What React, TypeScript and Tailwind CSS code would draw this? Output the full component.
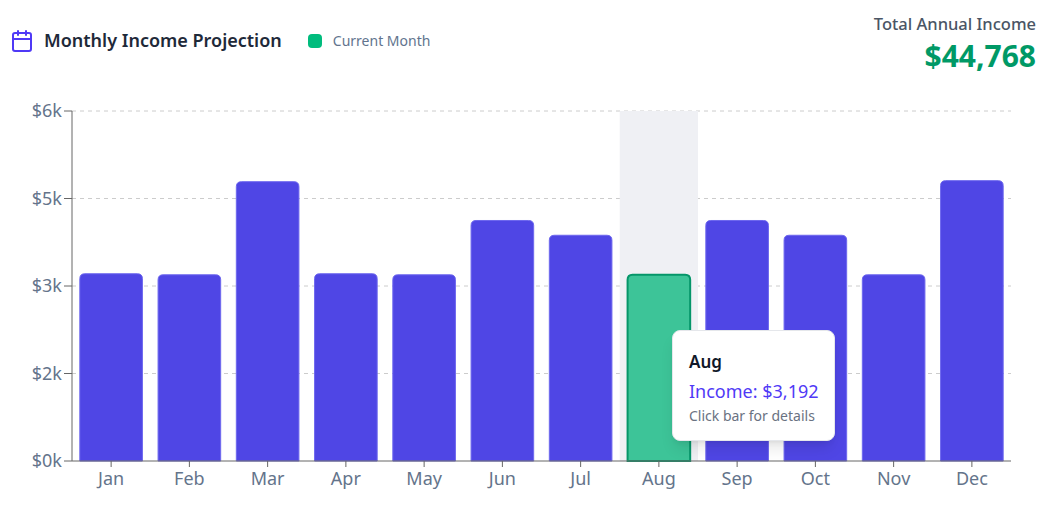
import { Calendar } from "lucide-react";

const months = [
  { name: "Jan", income: 3210 },
  { name: "Feb", income: 3192 },
  { name: "Mar", income: 4788 },
  { name: "Apr", income: 3210 },
  { name: "May", income: 3192 },
  { name: "Jun", income: 4123 },
  { name: "Jul", income: 3870 },
  { name: "Aug", income: 3192 },
  { name: "Sep", income: 4123 },
  { name: "Oct", income: 3870 },
  { name: "Nov", income: 3192 },
  { name: "Dec", income: 4806 },
];

const CURRENT = 7;
const TOP = 90;
const left = 72;
const right = 1011;
const y0 = 461;
const y1 = 111;
const maxVal = 6000;
const band = (right - left) / months.length;
const gap = band * 0.1;
const barW = band - gap * 2;
const ticks = [0, 1500, 3000, 4500, 6000];

const yOf = (v: number) => y0 - (v / maxVal) * (y0 - y1);
const fmt = (v: number) => `$${(v / 1000).toFixed(0)}k`;

function barPath(x: number, y: number, w: number, h: number, r: number) {
  return `M${x},${y + h} L${x},${y + r} Q${x},${y} ${x + r},${y} L${x + w - r},${y} Q${x + w},${y} ${x + w},${y + r} L${x + w},${y + h} Z`;
}

const IncomeChart = () => {
  return (
    <div className="relative h-[417px] w-full">
      <svg width="1050" height="417" className="block" style={{ fontFamily: '"Noto Sans", sans-serif' }}>
        <g transform={`translate(0,${-TOP})`}>
          {/* grid */}
          {ticks.slice(1).map((t) => (
            <line key={t} x1={left} x2={right} y1={yOf(t)} y2={yOf(t)} stroke="#cccccc" strokeDasharray="4 4" />
          ))}

          {/* hover cursor */}
          <rect x={left + band * CURRENT} y={y1} width={band} height={y0 - y1} fill="#eff0f4" />

          {/* bars */}
          {months.map((m, i) => {
            const x = left + band * i + gap;
            const y = yOf(m.income);
            const isCur = i === CURRENT;
            return (
              <path
                key={m.name}
                d={barPath(x, y, barW, y0 - y, 5)}
                fill={isCur ? "#10b981" : "#4f46e5"}
                fillOpacity={isCur ? 0.8 : 1}
                stroke={isCur ? "#059669" : "#6d67ee"}
                strokeWidth={isCur ? 2 : 1}
              />
            );
          })}

          {/* y axis */}
          <line x1={left} x2={left} y1={y1} y2={y0} stroke="#666" />
          {ticks.map((t) => (
            <g key={t}>
              <line x1={left - 8} x2={left} y1={yOf(t)} y2={yOf(t)} stroke="#666" />
              <text x={left - 10} y={yOf(t)} dy="0.35em" textAnchor="end" fontSize="18" fill="#64748b">
                {fmt(t)}
              </text>
            </g>
          ))}

          {/* x axis */}
          <line x1={left} x2={right} y1={y0} y2={y0} stroke="#666" />
          {months.map((m, i) => {
            const cx = left + band * i + band / 2;
            return (
              <g key={m.name}>
                <line x1={cx} x2={cx} y1={y0} y2={y0 + 6} stroke="#666" />
                <text x={cx} y={479} dy="0.35em" textAnchor="middle" fontSize="18" fill="#64748b">
                  {m.name}
                </text>
              </g>
            );
          })}
        </g>
      </svg>

      {/* Tooltip */}
      <div className="absolute left-[672px] top-[240px] w-[163px] h-[111px] whitespace-nowrap rounded-lg border border-gray-200 bg-white px-4 pt-[19px] shadow-lg">
        <p className="text-[17px] font-semibold leading-6 text-gray-900">Aug</p>
        <p className="mt-[5px] text-[18px] leading-6 text-indigo-600">Income: $3,192</p>
        <p className="mt-[3px] text-[14px] leading-5 text-gray-500">Click bar for details</p>
      </div>
    </div>
  );
};

export default function App() {
  return (
    <div className="h-[507px] w-[1050px] overflow-hidden bg-white" style={{ fontFamily: '"Noto Sans", sans-serif' }}>
      {/* Header */}
      <div className="flex h-[90px] items-start justify-between pl-[10px] pr-[14px] pt-[12px]">
        <div className="flex items-center gap-[10px] pt-[15px]">
          <Calendar className="h-[24px] w-[24px] text-indigo-600" strokeWidth={2} />
          <h2 className="text-[18px] font-semibold text-gray-800">Monthly Income Projection</h2>
          <div className="ml-[16px] flex items-center gap-[11px]">
            <span className="h-[14px] w-[14px] rounded bg-emerald-500" />
            <span className="text-[14px] text-slate-500">Current Month</span>
          </div>
        </div>
        <div className="pt-[2px] text-right">
          <p className="text-[16.5px] font-medium leading-5 text-gray-600">Total Annual Income</p>
          <p className="mt-[6px] text-[30px] font-bold leading-8 text-emerald-600">$44,768</p>
        </div>
      </div>

      <IncomeChart />
    </div>
  );
}
